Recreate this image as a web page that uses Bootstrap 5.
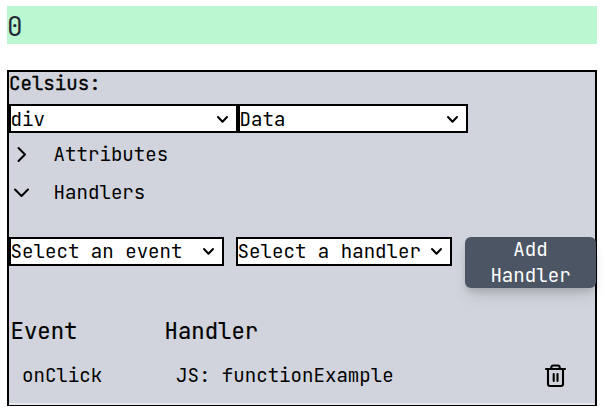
<!DOCTYPE html>
<html lang="en">
<head>
<meta charset="utf-8">
<meta name="viewport" content="width=device-width, initial-scale=1">
<title>Component editor</title>
<link href="https://cdn.jsdelivr.net/npm/bootstrap@5.3.0/dist/css/bootstrap.min.css" rel="stylesheet">
<style>
body { font-family: "JetBrains Mono", "DejaVu Sans Mono", monospace; font-size: 19.1px; line-height: 25px; color: #000; background: #fff; padding: 6px 8px 0 7px; overflow: hidden; }
svg { fill: none; stroke: currentColor; stroke-linecap: round; stroke-linejoin: round; flex: none; display: block; }
.result { background: #bbf7d0; height: 38px; line-height: 41px; font-size: 26px; color: #1f2937; margin-bottom: 26px; }
.editor { background: #d1d4dc; border: 2px solid #000; border-bottom-width: 1px; height: 336px; }
.editor-title { height: 32px; line-height: 23px; -webkit-text-stroke: .35px #000; }
.picker { height: 29px; border: 2px solid #000; background: #fff; color: #000; line-height: 25px; padding: 1px 7px 0 0; white-space: nowrap; }
.picker span { margin-left: -.4px; }
.w-tag { width: 229px; }
.w-kind { width: 230px; }
.w-event { width: 215px; margin-right: 12px; }
.w-handler { width: 216px; margin-right: 13px; }
.handler-form .picker { padding-top: 0; padding-bottom: 1px; }
.toggle-row { height: 38px; padding-left: 4px; gap: 20.6px; }
.handler-form { height: 51px; }
.add-btn { width: 131px; margin-right: -1px; height: 51px; background: #4b5563; color: #fff; border-radius: 6px; line-height: 26px; box-shadow: 0 4px 6px -1px rgba(0,0,0,.12), 0 10px 15px -3px rgba(0,0,0,.12); }
.grid-head { font-size: 22.3px; line-height: 30px; margin-top: 32px; padding-left: 1.5px; -webkit-text-stroke: .2px #000; }
.grid-body { margin-top: 14px; height: 30px; padding-left: 13px; padding-right: 28px; }
.col-event { width: 154px; }
.bin { margin-top: -1px; }
.grid-end { height: 2px; background: #e5e7eb; }
</style>
</head>
<body>
<div class="result">0</div>
<main class="editor d-flex flex-column">
  <div class="editor-title">Celsius:</div>
  <div class="d-flex">
    <button type="button" class="picker w-tag d-flex align-items-center justify-content-between"><span>div</span><svg width="13" height="9" stroke-width="2"><path d="M2 2l4.5 4.8L11 2"/></svg></button>
    <button type="button" class="picker w-kind d-flex align-items-center justify-content-between"><span>Data</span><svg width="13" height="9" stroke-width="2"><path d="M2 2l4.5 4.8L11 2"/></svg></button>
  </div>
  <div class="toggle-row d-flex align-items-center pt-1"><svg width="20" height="20" stroke-width="2"><path d="M5.500 4l6.500 6.500L5.500 17"/></svg><span>Attributes</span></div>
  <div class="toggle-row d-flex align-items-center pt-1"><svg width="20" height="20" stroke-width="2"><path d="M2 7.500l6.500 6.500L15 7.500"/></svg><span>Handlers</span></div>
  <div class="handler-form d-flex align-items-start mt-4 pt-1">
    <button type="button" class="picker w-event d-flex align-items-center justify-content-between"><span>Select an event</span><svg width="13" height="9" stroke-width="2"><path d="M2 2l4.500 4.800L11 2"/></svg></button>
    <button type="button" class="picker w-handler d-flex align-items-center justify-content-between"><span>Select a handler</span><svg width="13" height="9" stroke-width="2"><path d="M2 2l4.500 4.800L11 2"/></svg></button>
    <button type="button" class="add-btn border-0 p-0 text-center flex-shrink-0">Add<br>Handler</button>
  </div>
  <div class="grid-head d-flex"><div class="col-event">Event</div><div>Handler</div></div>
  <div class="grid-body d-flex align-items-center">
    <div class="col-event">onClick</div><div>JS: functionExample</div>
    <svg class="bin ms-auto" width="24" height="26" stroke-width="2.1"><path d="M3 7h19M5 7v15q0 2 2 2h11q2 0 2-2V7M8.300 7V5.500q0-2 2-2h4.400q2 0 2 2v1.500M10.700 12v7M14.500 12v7"/></svg>
  </div>
  <div class="grid-end mt-auto"></div>
</main>
<script src="https://cdn.jsdelivr.net/npm/bootstrap@5.3.0/dist/js/bootstrap.bundle.min.js"></script>
</body>
</html>
